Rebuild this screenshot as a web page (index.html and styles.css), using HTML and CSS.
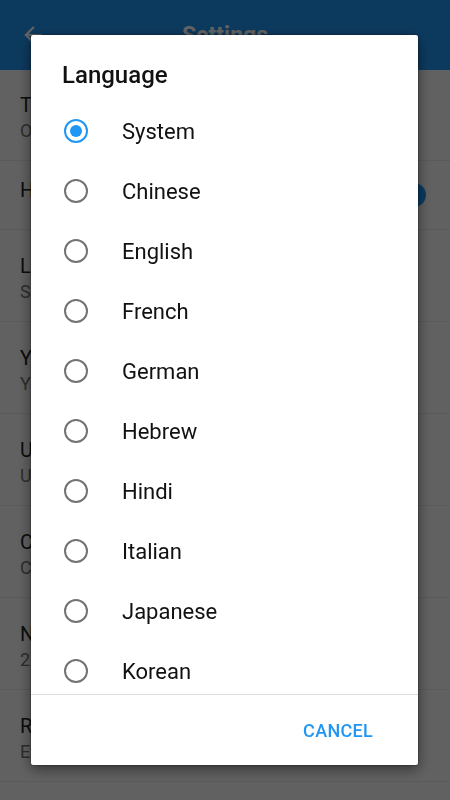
FILE: index.html
```html
<!DOCTYPE html>
<html>
<head>
<meta charset="utf-8">
<link rel="stylesheet" href="styles.css">
</head>
<body>
<div class="app">
  <header class="appbar">
    <svg class="back" viewBox="0 0 24 24" width="26" height="26"><path d="M20 11H7.83l5.59-5.59L12 4l-8 8 8 8 1.41-1.41L7.83 13H20v-2z" fill="#fff"/></svg>
    <div class="appbar-title">Settings</div>
  </header>
  <ul class="settings">
    <li class="item first"><div class="t">Theme</div><div class="s">Original</div></li>
    <li class="item single"><div class="t">Hide status bar</div><div class="switch"><span class="track"></span><span class="thumb"></span></div></li>
    <li class="item"><div class="t">Language</div><div class="s">System</div></li>
    <li class="item"><div class="t">Year format</div><div class="s">YYYY</div></li>
    <li class="item"><div class="t">Units</div><div class="s">Uses metric units</div></li>
    <li class="item"><div class="t">Calendar</div><div class="s">Choose calendar type</div></li>
    <li class="item"><div class="t">Notification time</div><div class="s">21:00</div></li>
    <li class="item"><div class="t">Reminder</div><div class="s">Every day</div></li>
  </ul>
</div>
<div class="scrim"></div>
<div class="dialog">
  <h2 class="dialog-title">Language</h2>
  <div class="options">
    <div class="opt"><span class="radio on"></span><span class="label">System</span></div>
    <div class="opt"><span class="radio"></span><span class="label">Chinese</span></div>
    <div class="opt"><span class="radio"></span><span class="label">English</span></div>
    <div class="opt"><span class="radio"></span><span class="label">French</span></div>
    <div class="opt"><span class="radio"></span><span class="label">German</span></div>
    <div class="opt"><span class="radio"></span><span class="label">Hebrew</span></div>
    <div class="opt"><span class="radio"></span><span class="label">Hindi</span></div>
    <div class="opt"><span class="radio"></span><span class="label">Italian</span></div>
    <div class="opt"><span class="radio"></span><span class="label">Japanese</span></div>
    <div class="opt"><span class="radio"></span><span class="label">Korean</span></div>
  </div>
  <div class="actions"><button class="btn">CANCEL</button></div>
</div>
</body>
</html>
```
FILE: styles.css
```css
* { box-sizing: border-box; }
html, body { margin: 0; padding: 0; }
body {
  width: 450px;
  height: 800px;
  overflow: hidden;
  font-family: Roboto, "Noto Sans", sans-serif;
  background: #fafafa;
}
.app { width: 450px; }
.appbar {
  height: 70px;
  background: #2196f3;
  display: flex;
  align-items: center;
  padding: 0 20px;
}
.back { flex: none; }
.appbar-title {
  flex: 1;
  text-align: center;
  color: #fff;
  font-size: 23px;
  font-weight: 700;
  margin-right: 26px;
}
.settings { list-style: none; margin: 0; padding: 0; }
.item {
  height: 92px;
  padding: 23px 20px 0;
  border-bottom: 1px solid #e8e8e8;
  position: relative;
}
.item.first { height: 91px; padding-top: 22px; }
.item.single { height: 69px; padding-top: 16px; }
.t { font-size: 20px; color: #212121; line-height: 26px; white-space: nowrap; }
.s { font-size: 18px; color: #757575; line-height: 26px; white-space: nowrap; }
.switch { position: absolute; right: 26px; top: 23px; width: 40px; height: 22px; }
.track { position: absolute; left: 2px; right: 2px; top: 4px; height: 14px; border-radius: 7px; background: #90caf9; }
.thumb { position: absolute; right: -2px; top: -1px; width: 24px; height: 24px; border-radius: 50%; background: #2196f3; }
.scrim {
  position: fixed;
  inset: 0;
  z-index: 10;
  background: rgba(0,0,0,0.61);
}
.dialog {
  position: fixed;
  z-index: 11;
  left: 31px;
  top: 35px;
  width: 387px;
  height: 730px;
  background: #fff;
  border-radius: 2px;
  box-shadow: 0 4px 14px rgba(0,0,0,0.5), 0 0 2px rgba(0,0,0,0.6);
  display: flex;
  flex-direction: column;
}
.dialog-title {
  margin: 0;
  padding: 25px 31px 0;
  font-size: 24px;
  line-height: 30px;
  font-weight: 500;
  color: #111;
}
.options {
  margin-top: 11px;
  flex: 1;
  overflow: hidden;
  border-bottom: 1px solid #dcdcdc;
}
.opt {
  height: 60px;
  display: flex;
  align-items: center;
  padding-left: 33px;
}
.radio {
  width: 24px;
  height: 24px;
  border-radius: 50%;
  border: 2px solid #737373;
  display: flex;
  align-items: center;
  justify-content: center;
  flex: none;
}
.radio.on { border-color: #2196f3; }
.radio.on::after {
  content: "";
  width: 12px;
  height: 12px;
  border-radius: 50%;
  background: #2196f3;
}
.label {
  margin-left: 34px;
  font-size: 22px;
  color: #111;
}
.actions {
  height: 70px;
  display: flex;
  align-items: center;
  justify-content: flex-end;
  padding-right: 45px;
}
.btn {
  border: 0;
  background: none;
  padding: 0;
  font-family: Roboto, "Noto Sans", sans-serif;
  font-size: 18px;
  font-weight: 500;
  color: #2196f3;
  letter-spacing: 0.3px;
}
```
